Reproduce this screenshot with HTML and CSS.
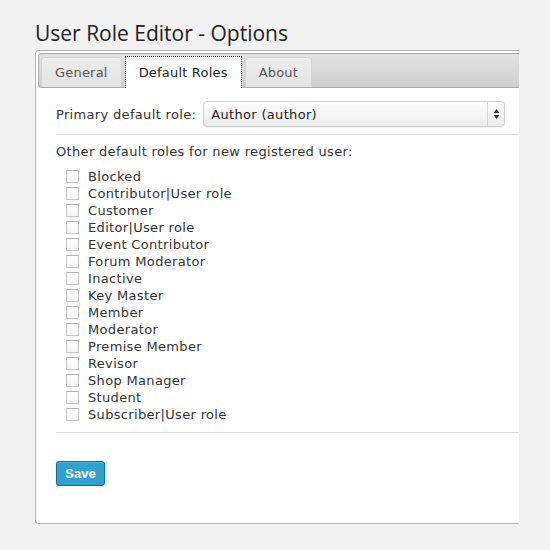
FILE: index.html
```html
<!DOCTYPE html>
<html>
<head>
<meta charset="utf-8">
<link rel="stylesheet" href="styles.css">
</head>
<body>
<div class="wrap">
  <h1 class="title">User Role Editor - Options</h1>
  <div class="panel">
    <div class="tabbar">
      <div class="tab">General</div>
      <div class="tab active">Default Roles</div>
      <div class="tab">About</div>
    </div>
    <div class="content">
      <div class="row">
        <span class="lbl">Primary default role:</span>
        <div class="select">
          <span class="sel-text">Author (author)</span>
          <span class="sel-arrows">
            <svg width="7" height="12" viewBox="0 0 7 12"><path d="M3.5 1 L6.5 5 L0.5 5 Z" fill="#333"/><path d="M3.5 11 L6.5 7 L0.5 7 Z" fill="#333"/></svg>
          </span>
        </div>
      </div>
      <div class="sep"></div>
      <div class="other">Other default roles for new registered user:</div>
      <ul class="roles">
        <li><span class="cb"></span>Blocked</li>
        <li><span class="cb"></span>Contributor|User role</li>
        <li><span class="cb"></span>Customer</li>
        <li><span class="cb"></span>Editor|User role</li>
        <li><span class="cb"></span>Event Contributor</li>
        <li><span class="cb"></span>Forum Moderator</li>
        <li><span class="cb"></span>Inactive</li>
        <li><span class="cb"></span>Key Master</li>
        <li><span class="cb"></span>Member</li>
        <li><span class="cb"></span>Moderator</li>
        <li><span class="cb"></span>Premise Member</li>
        <li><span class="cb"></span>Revisor</li>
        <li><span class="cb"></span>Shop Manager</li>
        <li><span class="cb"></span>Student</li>
        <li><span class="cb"></span>Subscriber|User role</li>
      </ul>
      <div class="sep sep2"></div>
      <button class="save">Save</button>
    </div>
  </div>
</div>
</body>
</html>
```
FILE: styles.css
```css
html, body {
  margin: 0;
  padding: 0;
  background: #f1f1f1;
}
body {
  font-family: "DejaVu Sans", Verdana, sans-serif;
  font-size: 13px;
  color: #333;
  width: 550px;
  height: 550px;
  overflow: hidden;
}
.wrap {
  padding-top: 17px;
}
.title {
  margin: 0 0 0 35px;
  font-family: "Open Sans", sans-serif;
  font-weight: 400;
  font-size: 21px;
  line-height: 32px;
  height: 33px;
  color: #222;
}
.panel {
  margin-left: 35px;
  width: 484px;
  height: 474px;
  box-sizing: border-box;
  background: #fff;
  border: 1px solid #b4b4b4;
  border-right: none;
  border-radius: 4px 0 0 4px;
  padding: 2px 0 0 2px;
}
.tabbar {
  display: flex;
  align-items: flex-end;
  gap: 3px;
  height: 33px;
  box-sizing: content-box;
  padding: 0 0 0 2px;
  border: 1px solid #aaa;
  border-right: none;
  border-radius: 4px 0 0 4px;
  background: linear-gradient(#e3e3e3, #cdcdcd);
}
.tab {
  height: 29px;
  line-height: 29px;
  padding: 0 13px;
  letter-spacing: 0.2px;
  border: 1px solid #d3d3d3;
  border-bottom: none;
  border-radius: 4px 4px 0 0;
  background: linear-gradient(#eeeeee, #e2e2e2);
  color: #555;
}
.tab.active {
  height: 31px;
  line-height: 31px;
  margin-bottom: -1px;
  background: #fff;
  border: 1px dotted #333;
  border-bottom: none;
  border-radius: 0;
  color: #222;
}
.content {
  padding: 13px 0 0 18px;
  letter-spacing: 0.33px;
}
.row {
  display: flex;
  align-items: center;
  gap: 7px;
  height: 26px;
}
.lbl {
  color: #333;
}
.select {
  display: flex;
  align-items: center;
  width: 302px;
  height: 26px;
  box-sizing: border-box;
  border: 1px solid #cfcfcf;
  border-radius: 4px;
  background: linear-gradient(#fdfdfd, #ececec);
  box-shadow: 0 1px 1px rgba(0,0,0,0.06);
}
.sel-text {
  flex: 1;
  padding-left: 7px;
  color: #222;
}
.sel-arrows {
  width: 16px;
  height: 24px;
  border-left: 1px solid #d4d4d4;
  display: flex;
  align-items: center;
  justify-content: center;
}
.sep {
  height: 1px;
  background: #dcdcdc;
  margin: 7px 0 0 0;
}
.other {
  margin-top: 8px;
  line-height: 17px;
  color: #333;
}
.roles {
  list-style: none;
  margin: 8px 0 0 0;
  padding: 0 0 0 10px;
}
.roles li {
  display: flex;
  align-items: center;
  height: 17px;
  line-height: 17px;
  color: #333;
}
.cb {
  display: inline-block;
  width: 13px;
  height: 13px;
  box-sizing: border-box;
  border: 1px solid #c4c4c4;
  border-top-color: #b4b4b4;
  background: linear-gradient(#ffffff, #f6f6f6);
  border-radius: 1px;
  margin-right: 9px;
}
.sep2 {
  margin-top: 9px;
}
.save {
  margin-top: 28px;
  width: 49px;
  height: 25px;
  padding: 0;
  border: 1px solid #0074a2;
  border-radius: 3px;
  background: #2ea2cc;
  box-shadow: inset 0 1px 0 rgba(120,200,230,0.5);
  color: #fff;
  font-family: "Liberation Sans", Arial, sans-serif;
  font-weight: bold;
  font-size: 13px;
  letter-spacing: 0;
}
```
